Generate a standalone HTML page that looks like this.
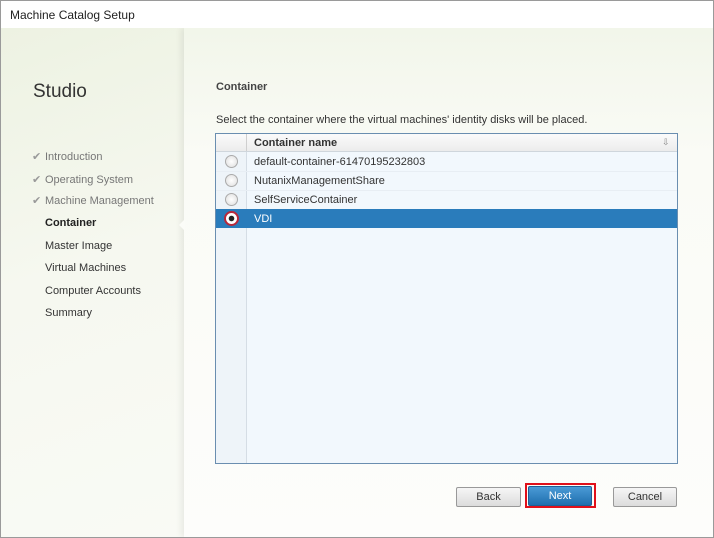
<!DOCTYPE html>
<html><head><style>
body{margin:0;width:714px;height:538px;overflow:hidden;font-family:"Liberation Sans",sans-serif;background:#fff;position:relative}
.a{position:absolute}
.win{left:0;top:0;width:712px;height:536px;border:1px solid #9a9a9a}
.title{left:10px;top:8px;font-size:12px;color:#222}
.content{left:1px;top:28px;width:712px;height:509px;background:linear-gradient(160deg,#edf2e2 0%,#f6f8f0 35%,#fbfcf8 100%)}
.right{left:184px;top:28px;width:529px;height:509px;background:linear-gradient(180deg,#f2f6ea 0%,#fafbf6 25%,#fdfdfb 100%);box-shadow:-3px 0 6px rgba(0,0,0,0.07)}
.nav{left:45px;font-size:11px;color:#777}
.ck{left:32px;font-size:11px;color:#999}
.row{left:216px;width:461px;height:19px;border-bottom:1px solid #e8eef4;font-size:11px;color:#333}
.row span{position:absolute;left:38px;top:4px}
.rad{position:absolute;left:9px;top:3px;width:11px;height:11px;border-radius:50%;border:1px solid #aaa;background:radial-gradient(#fff,#ddd)}
.btn{top:487px;height:18px;font-size:11px;text-align:center;line-height:18px;border:1px solid #999;border-radius:2px;background:linear-gradient(#f6f6f6,#dcdcdc);color:#333}
</style></head><body>
<div class="a content"></div>
<div class="a right"></div>
<div class="a win"></div>
<div class="a" style="left:1px;top:1px;width:712px;height:27px;background:#fff"></div>
<div class="a title">Machine Catalog Setup</div>
<div class="a" style="left:33px;top:81px;font-size:19px;color:#333">Studio</div>
<div class="a ck" style="top:150px">✔</div><div class="a nav" style="top:151px">Introduction</div>
<div class="a ck" style="top:173px">✔</div><div class="a nav" style="top:174px">Operating System</div>
<div class="a ck" style="top:194px">✔</div><div class="a nav" style="top:195px">Machine Management</div>
<div class="a nav" style="top:217px;color:#222;font-weight:bold">Container</div>
<div class="a nav" style="top:240px;color:#333">Master Image</div>
<div class="a nav" style="top:262px;color:#333">Virtual Machines</div>
<div class="a nav" style="top:285px;color:#333">Computer Accounts</div>
<div class="a nav" style="top:307px;color:#333">Summary</div>
<div class="a" style="left:179px;top:219px;width:0;height:0;border-top:6px solid transparent;border-bottom:6px solid transparent;border-right:6px solid #fbfcf8"></div>
<div class="a" style="left:216px;top:81px;font-size:11px;font-weight:bold;color:#444">Container</div>
<div class="a" style="left:216px;top:114px;font-size:11px;color:#333">Select the container where the virtual machines' identity disks will be placed.</div>
<div class="a" style="left:215px;top:133px;width:461px;height:329px;border:1px solid #6a8eb0;background:#f2f8fd"></div>
<div class="a" style="left:216px;top:134px;width:30px;height:329px;background:#eef4f9;border-right:1px solid #d5dde5"></div>
<div class="a" style="left:216px;top:134px;width:461px;height:17px;background:linear-gradient(#fbfbfb,#ececec);border-bottom:1px solid #cfd6dc"></div>
<div class="a" style="left:246px;top:134px;width:1px;height:17px;background:#cfcfcf"></div>
<div class="a" style="left:254px;top:137px;font-size:11px;font-weight:bold;color:#333">Container name</div>
<div class="a" style="left:662px;top:137px;font-size:9px;color:#888">⇩</div>
<div class="a row" style="top:152px"><div class="rad"></div><span>default-container-61470195232803</span></div>
<div class="a row" style="top:171px"><div class="rad"></div><span>NutanixManagementShare</span></div>
<div class="a row" style="top:190px"><div class="rad"></div><span>SelfServiceContainer</span></div>
<div class="a row" style="top:209px;background:#2a7cbb;color:#fff;border-bottom:none"><div class="rad" style="left:8px;top:2px;border:2px solid #b8283a;background:radial-gradient(#222 0,#222 2.5px,#fff 3px)"></div><span>VDI</span></div>
<div class="a btn" style="left:456px;width:63px">Back</div>
<div class="a" style="left:525px;top:483px;width:67px;height:21px;border:2px solid #e0101a"></div>
<div class="a btn" style="left:528px;width:62px;top:486px;background:linear-gradient(#4a9ad6,#1f6fae);color:#fff;border-color:#1f5f95">Next</div>
<div class="a btn" style="left:613px;width:62px">Cancel</div>
</body></html>
